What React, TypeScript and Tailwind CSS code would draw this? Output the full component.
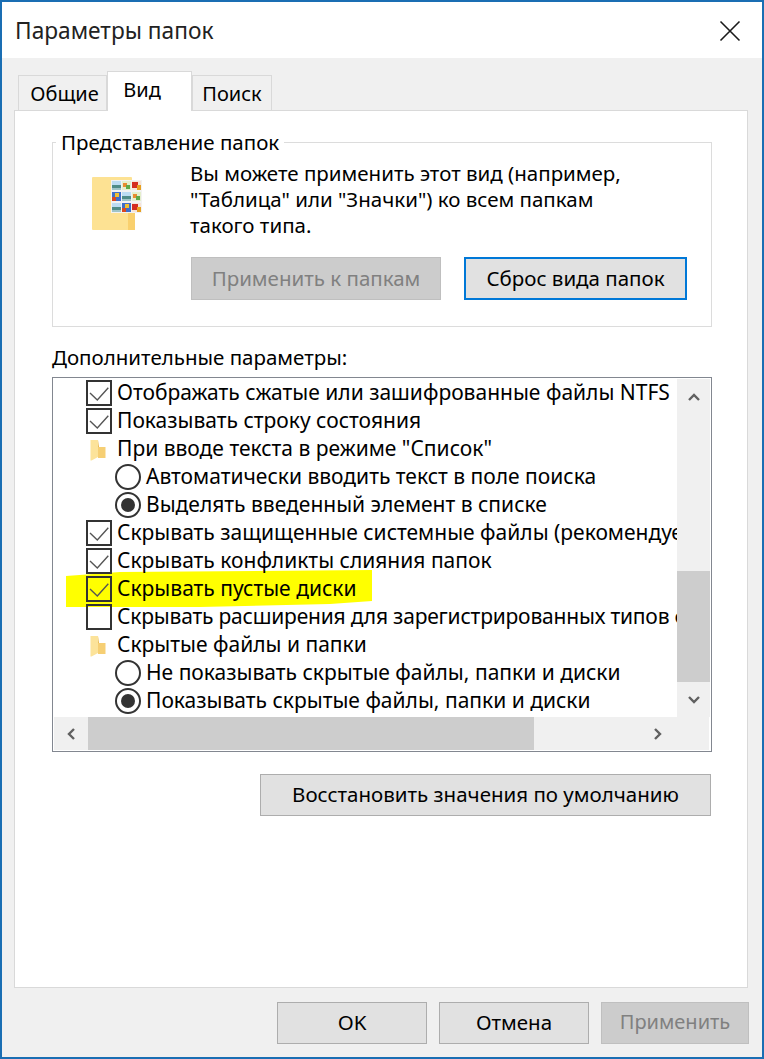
import React from "react";

const font = "font-['Noto_Sans',sans-serif]";

const Check = () => (
  <div className="w-[26px] h-[26px] shrink-0 border-2 border-[#333333] flex items-center justify-center">
    <svg width="22" height="22" viewBox="0 0 22 22" fill="none">
      <path d="M2 11 L9.3 18 L20.3 5.7" stroke="#555555" strokeWidth="1.4" />
    </svg>
  </div>
);

const Empty = () => <div className="w-[26px] h-[26px] shrink-0 border-2 border-[#333333]" />;

const Radio = ({ on }: { on?: boolean }) => (
  <div className="w-[26px] h-[26px] shrink-0 rounded-full border-2 border-[#333333] flex items-center justify-center">
    {on && <div className="w-[14px] h-[14px] rounded-full bg-[#333333]" />}
  </div>
);

const SmallFolder = () => (
  <svg width="16" height="22" viewBox="0 0 16 22" className="shrink-0 mt-[2px]">
    <path d="M8 8 H15.5 V19 H8 Z" fill="#f6cf74" />
    <path d="M8 1 L9 8 H8 Z" fill="#e8b850" />
    <path d="M0.5 1 H8 V18 L1.5 21.5 H0.5 Z" fill="#fce39a" />
  </svg>
);

const Row = ({ children }: { children: React.ReactNode }) => (
  <div className="h-[28px] flex items-center whitespace-nowrap">{children}</div>
);

const Thumb = ({ x, y, kind }: { x: number; y: number; kind: string }) => {
  if (kind === "land")
    return (
      <g>
        <rect x={x} y={y} width="9" height="9" fill="#bcdcf2" />
        <rect x={x} y={y + 4} width="9" height="3" fill="#4f8c88" />
        <rect x={x} y={y + 7} width="9" height="2" fill="#9fc4c8" />
      </g>
    );
  if (kind === "red")
    return (
      <g>
        <rect x={x} y={y} width="9" height="9" fill="#f6e4d8" />
        <rect x={x} y={y + 1} width="6" height="6" fill="#d42c20" />
        <rect x={x + 5} y={y + 4} width="4" height="5" fill="#e8a020" />
      </g>
    );
  if (kind === "mix")
    return (
      <g>
        <rect x={x} y={y} width="9" height="9" fill="#3f6ec8" />
        <rect x={x + 3} y={y + 1} width="4" height="4" fill="#f0c030" />
        <rect x={x} y={y + 5} width="4" height="4" fill="#d84820" />
      </g>
    );
  return (
    <g>
      <rect x={x} y={y} width="9" height="9" fill="#e4eecc" />
      <rect x={x + 1} y={y + 2} width="4" height="4" fill="#e88a30" />
      <rect x={x + 4} y={y + 4} width="4" height="4" fill="#5ea848" />
    </g>
  );
};

const BigFolder = () => (
  <svg width="52" height="56" viewBox="0 0 52 56" className="shrink-0">
    <rect x="0" y="1" width="40" height="53" rx="1" fill="#fde293" />
    <rect x="36" y="36" width="7" height="18" fill="#f9d06e" />
    <rect x="19" y="4" width="31" height="33" fill="#f2f2f2" />
    <Thumb x={20} y={5} kind="land" />
    <Thumb x={30} y={5} kind="flower" />
    <Thumb x={40} y={5} kind="red" />
    <Thumb x={20} y={16} kind="mix" />
    <Thumb x={30} y={16} kind="land" />
    <Thumb x={40} y={16} kind="flower" />
    <Thumb x={20} y={27} kind="land" />
    <Thumb x={30} y={27} kind="mix" />
    <Thumb x={40} y={27} kind="red" />
  </svg>
);

export default function App() {
  return (
    <div className={`w-[764px] h-[1059px] border-2 border-[#1a6eb3] bg-[#f0f0f0] flex flex-col overflow-hidden text-black ${font}`}>
      {/* title bar */}
      <div className="h-[56px] shrink-0 bg-white flex items-center justify-between pl-[13px] pr-[21px] pt-[2px]">
        <span className="text-[22.7px] text-[#222222]">Параметры папок</span>
        <svg width="22" height="22" viewBox="0 0 22 22" fill="none">
          <path d="M1.5 1.5 L20.5 20.5 M20.5 1.5 L1.5 20.5" stroke="#1a1a1a" strokeWidth="1.6" />
        </svg>
      </div>

      {/* tabs */}
      <div className="mt-[13px] h-[39px] shrink-0 flex items-end pl-[16px] relative z-10 text-[20px]">
        <div className="w-[89px] h-[35px] bg-[#f0f0f0] border border-b-0 border-[#d9d9d9] flex items-center justify-center pl-[4px] pt-[2px]">Общие</div>
        <div className="w-[85px] h-[40px] -mb-px bg-white border border-b-0 border-[#d9d9d9] flex items-start justify-center pt-[3px] pr-[15px]">Вид</div>
        <div className="w-[80px] h-[35px] bg-[#f0f0f0] border border-b-0 border-[#d9d9d9] flex items-center justify-center pt-[2px]">Поиск</div>
      </div>

      {/* panel */}
      <div className="ml-[12px] w-[734px] h-[878px] shrink-0 bg-white border border-[#d9d9d9] px-[37px] pt-[31px] text-[20.5px]">
        <div className="relative w-[660px] h-[185px] border border-[#dcdcdc] pl-[39px] pt-[17px]">
          <span className="absolute -top-[15px] left-[3px] bg-white px-[5px] leading-[28px]">Представление папок</span>
          <div className="flex gap-[46px]">
            <div className="pt-[16px]"><BigFolder /></div>
            <p className="leading-[26px]">
              Вы можете применить этот вид (например,<br />
              "Таблица" или "Значки") ко всем папкам<br />
              такого типа.
            </p>
          </div>
          <div className="flex mt-[19px] ml-[99px] gap-[23px]">
            <div className="w-[250px] h-[43px] bg-[#cccccc] border border-[#bfbfbf] text-[#808080] flex items-center justify-center">Применить к папкам</div>
            <div className="w-[223px] h-[43px] bg-[#e1e1e1] border-2 border-[#0078d7] flex items-center justify-center">Сброс вида папок</div>
          </div>
        </div>

        <div className="mt-[16px] leading-[28px]">Дополнительные параметры:</div>

        {/* tree list */}
        <div className="mt-[6px] w-[660px] h-[375px] border border-[#828790] bg-white p-px flex flex-col">
          <div className="flex flex-1 min-h-0">
            <div className="w-[624px] overflow-hidden pl-[32px] relative text-[21px]">
              <svg width="306" height="40" viewBox="0 0 306 40" className="absolute left-[12px] top-[190px]">
                <path d="M0 7 L54 3 L306 1 L306 32 L264 35 L134 38 L0 38 Z" fill="#ffff00" />
              </svg>
              <div className="relative whitespace-nowrap">
                <Row><Check /><span className="ml-[5px]">Отображать сжатые или зашифрованные файлы NTFS</span></Row>
                <Row><Check /><span className="ml-[5px]">Показывать строку состояния</span></Row>
                <Row><span className="ml-[4px] mr-[11px]"><SmallFolder /></span><span>При вводе текста в режиме "Список"</span></Row>
                <Row><span className="ml-[29px]"><Radio /></span><span className="ml-[5px]">Автоматически вводить текст в поле поиска</span></Row>
                <Row><span className="ml-[29px]"><Radio on /></span><span className="ml-[5px]">Выделять введенный элемент в списке</span></Row>
                <Row><Check /><span className="ml-[5px]">Скрывать защищенные системные файлы (рекомендуется)</span></Row>
                <Row><Check /><span className="ml-[5px]">Скрывать конфликты слияния папок</span></Row>
                <Row><Check /><span className="ml-[5px]">Скрывать пустые диски</span></Row>
                <Row><Empty /><span className="ml-[5px] tracking-[-0.2px]">Скрывать расширения для зарегистрированных типов файлов</span></Row>
                <Row><span className="ml-[4px] mr-[11px]"><SmallFolder /></span><span>Скрытые файлы и папки</span></Row>
                <Row><span className="ml-[29px]"><Radio /></span><span className="ml-[5px]">Не показывать скрытые файлы, папки и диски</span></Row>
                <Row><span className="ml-[29px]"><Radio on /></span><span className="ml-[5px]">Показывать скрытые файлы, папки и диски</span></Row>
              </div>
            </div>
            {/* vertical scrollbar */}
            <div className="w-[33px] bg-[#f0f0f0] flex flex-col">
              <div className="h-[34px] flex items-center justify-center pt-[2px]">
                <svg width="12" height="8" viewBox="0 0 12 8" fill="none"><path d="M1 7 L6 2 L11 7" stroke="#606060" strokeWidth="2.4" /></svg>
              </div>
              <div className="mt-[158px] h-[111px] bg-[#cdcdcd]" />
              <div className="flex-1 flex items-center justify-center">
                <svg width="12" height="8" viewBox="0 0 12 8" fill="none"><path d="M1 1 L6 6 L11 1" stroke="#606060" strokeWidth="2.4" /></svg>
              </div>
            </div>
          </div>
          {/* horizontal scrollbar */}
          <div className="h-[33px] mr-[1px] shrink-0 bg-[#f0f0f0] flex items-center">
            <div className="w-[34px] shrink-0 flex items-center justify-center">
              <svg width="8" height="12" viewBox="0 0 8 12" fill="none"><path d="M7 1 L2 6 L7 11" stroke="#606060" strokeWidth="2.4" /></svg>
            </div>
            <div className="w-[446px] h-full shrink-0 bg-[#cdcdcd]" />
            <div className="flex-1 flex items-center pl-[120px]">
              <svg width="8" height="12" viewBox="0 0 8 12" fill="none"><path d="M1 1 L6 6 L1 11" stroke="#606060" strokeWidth="2.4" /></svg>
            </div>
          </div>
        </div>

        <div className="mt-[22px] flex justify-end w-[659px]">
          <div className="w-[451px] h-[42px] bg-[#e1e1e1] border border-[#adadad] flex items-center justify-center pb-[2px]">Восстановить значения по умолчанию</div>
        </div>
      </div>

      {/* footer buttons */}
      <div className="mt-[14px] flex justify-end gap-[12px] pr-[13px] text-[20.5px]">
        <div className="w-[150px] h-[42px] bg-[#e1e1e1] border border-[#adadad] flex items-center justify-center pb-[2px]">OK</div>
        <div className="w-[150px] h-[42px] bg-[#e1e1e1] border border-[#adadad] flex items-center justify-center pb-[2px]">Отмена</div>
        <div className="w-[148px] h-[42px] bg-[#cccccc] border border-[#bfbfbf] text-[#808080] flex items-center justify-center pb-[2px] text-[20px]">Применить</div>
      </div>
    </div>
  );
}
